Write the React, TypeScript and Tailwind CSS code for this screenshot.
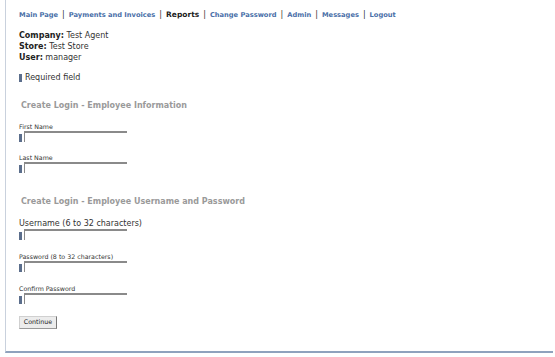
import React from "react";

const navLinks = [
  { label: "Main Page" },
  { label: "Payments and Invoices" },
  { label: "Reports", current: true },
  { label: "Change Password" },
  { label: "Admin" },
  { label: "Messages" },
  { label: "Logout" },
];

function Marker() {
  return <span className="inline-block w-[3px] h-[8px] bg-[#5b6e8c]" />;
}

function Field({ label, className, labelClass }: { label: string; className: string; labelClass: string }) {
  return (
    <div className={className}>
      <div className={`${labelClass} text-[#333]`}>{label}</div>
      <div className="flex items-end gap-[2px]">
        <Marker />
        <div className="w-[103px] h-[11px] border-t-2 border-l border-t-[#8a8a8a] border-l-[#8a8a8a] bg-white" />
      </div>
    </div>
  );
}

export default function App() {
  return (
    <div className="h-[357px] w-[555px] bg-white" style={{ fontFamily: '"DejaVu Sans", Verdana, sans-serif' }}>
      <div className="ml-[5px] w-[548px] h-[353px] border-l border-b-2 border-l-[#c9d1dd] border-b-[#8fa2bd] pl-[13px] pt-[10px]">
        <nav className="flex items-center text-[6.7px] font-bold text-[#4a6fa8] leading-none h-[10px]">
          {navLinks.map((l, i) => (
            <React.Fragment key={l.label}>
              {i > 0 && <span className="mx-[4px] font-normal text-[#333] text-[8px]">|</span>}
              <span className={l.current ? "text-[#222] text-[7.5px]" : ""}>{l.label}</span>
            </React.Fragment>
          ))}
        </nav>

        <div className="mt-[10px] text-[8px] text-[#333] leading-[11px]">
          <div><b className="text-[#222]">Company:</b> Test Agent</div>
          <div><b className="text-[#222]">Store:</b> Test Store</div>
          <div><b className="text-[#222]">User:</b> manager</div>
        </div>

        <div className="mt-[10px] h-[9px] flex items-center gap-[3px] text-[8px] text-[#333] leading-none">
          <Marker /> Required field
        </div>

        <h3 className="mt-[19px] ml-[2px] h-[10px] text-[8px] font-bold text-[#9a9a9a] leading-[10px]">
          Create Login - Employee Information
        </h3>

        <Field className="mt-[12px]" label="First Name" labelClass="text-[6.3px] h-[8px] leading-[8px]" />
        <Field className="mt-[12px]" label="Last Name" labelClass="text-[6.3px] h-[8px] leading-[8px]" />

        <h3 className="mt-[24px] ml-[2px] h-[10px] text-[8px] font-bold text-[#9a9a9a] leading-[10px]">
          Create Login - Employee Username and Password
        </h3>

        <Field className="mt-[12px]" label="Username (6 to 32 characters)" labelClass="text-[8px] h-[10px] leading-[10px]" />
        <Field className="mt-[12px]" label="Password (8 to 32 characters)" labelClass="text-[6.3px] h-[9px] leading-[9px]" />
        <Field className="mt-[13px]" label="Confirm Password" labelClass="text-[6.3px] h-[8px] leading-[8px]" />

        <button className="mt-[12px] h-[13px] w-[38px] text-[6.3px] text-[#222] leading-none bg-[#ececec] border border-[#d0d0d0] border-r-[#777] border-b-[#999]">
          Continue
        </button>
      </div>
    </div>
  );
}
